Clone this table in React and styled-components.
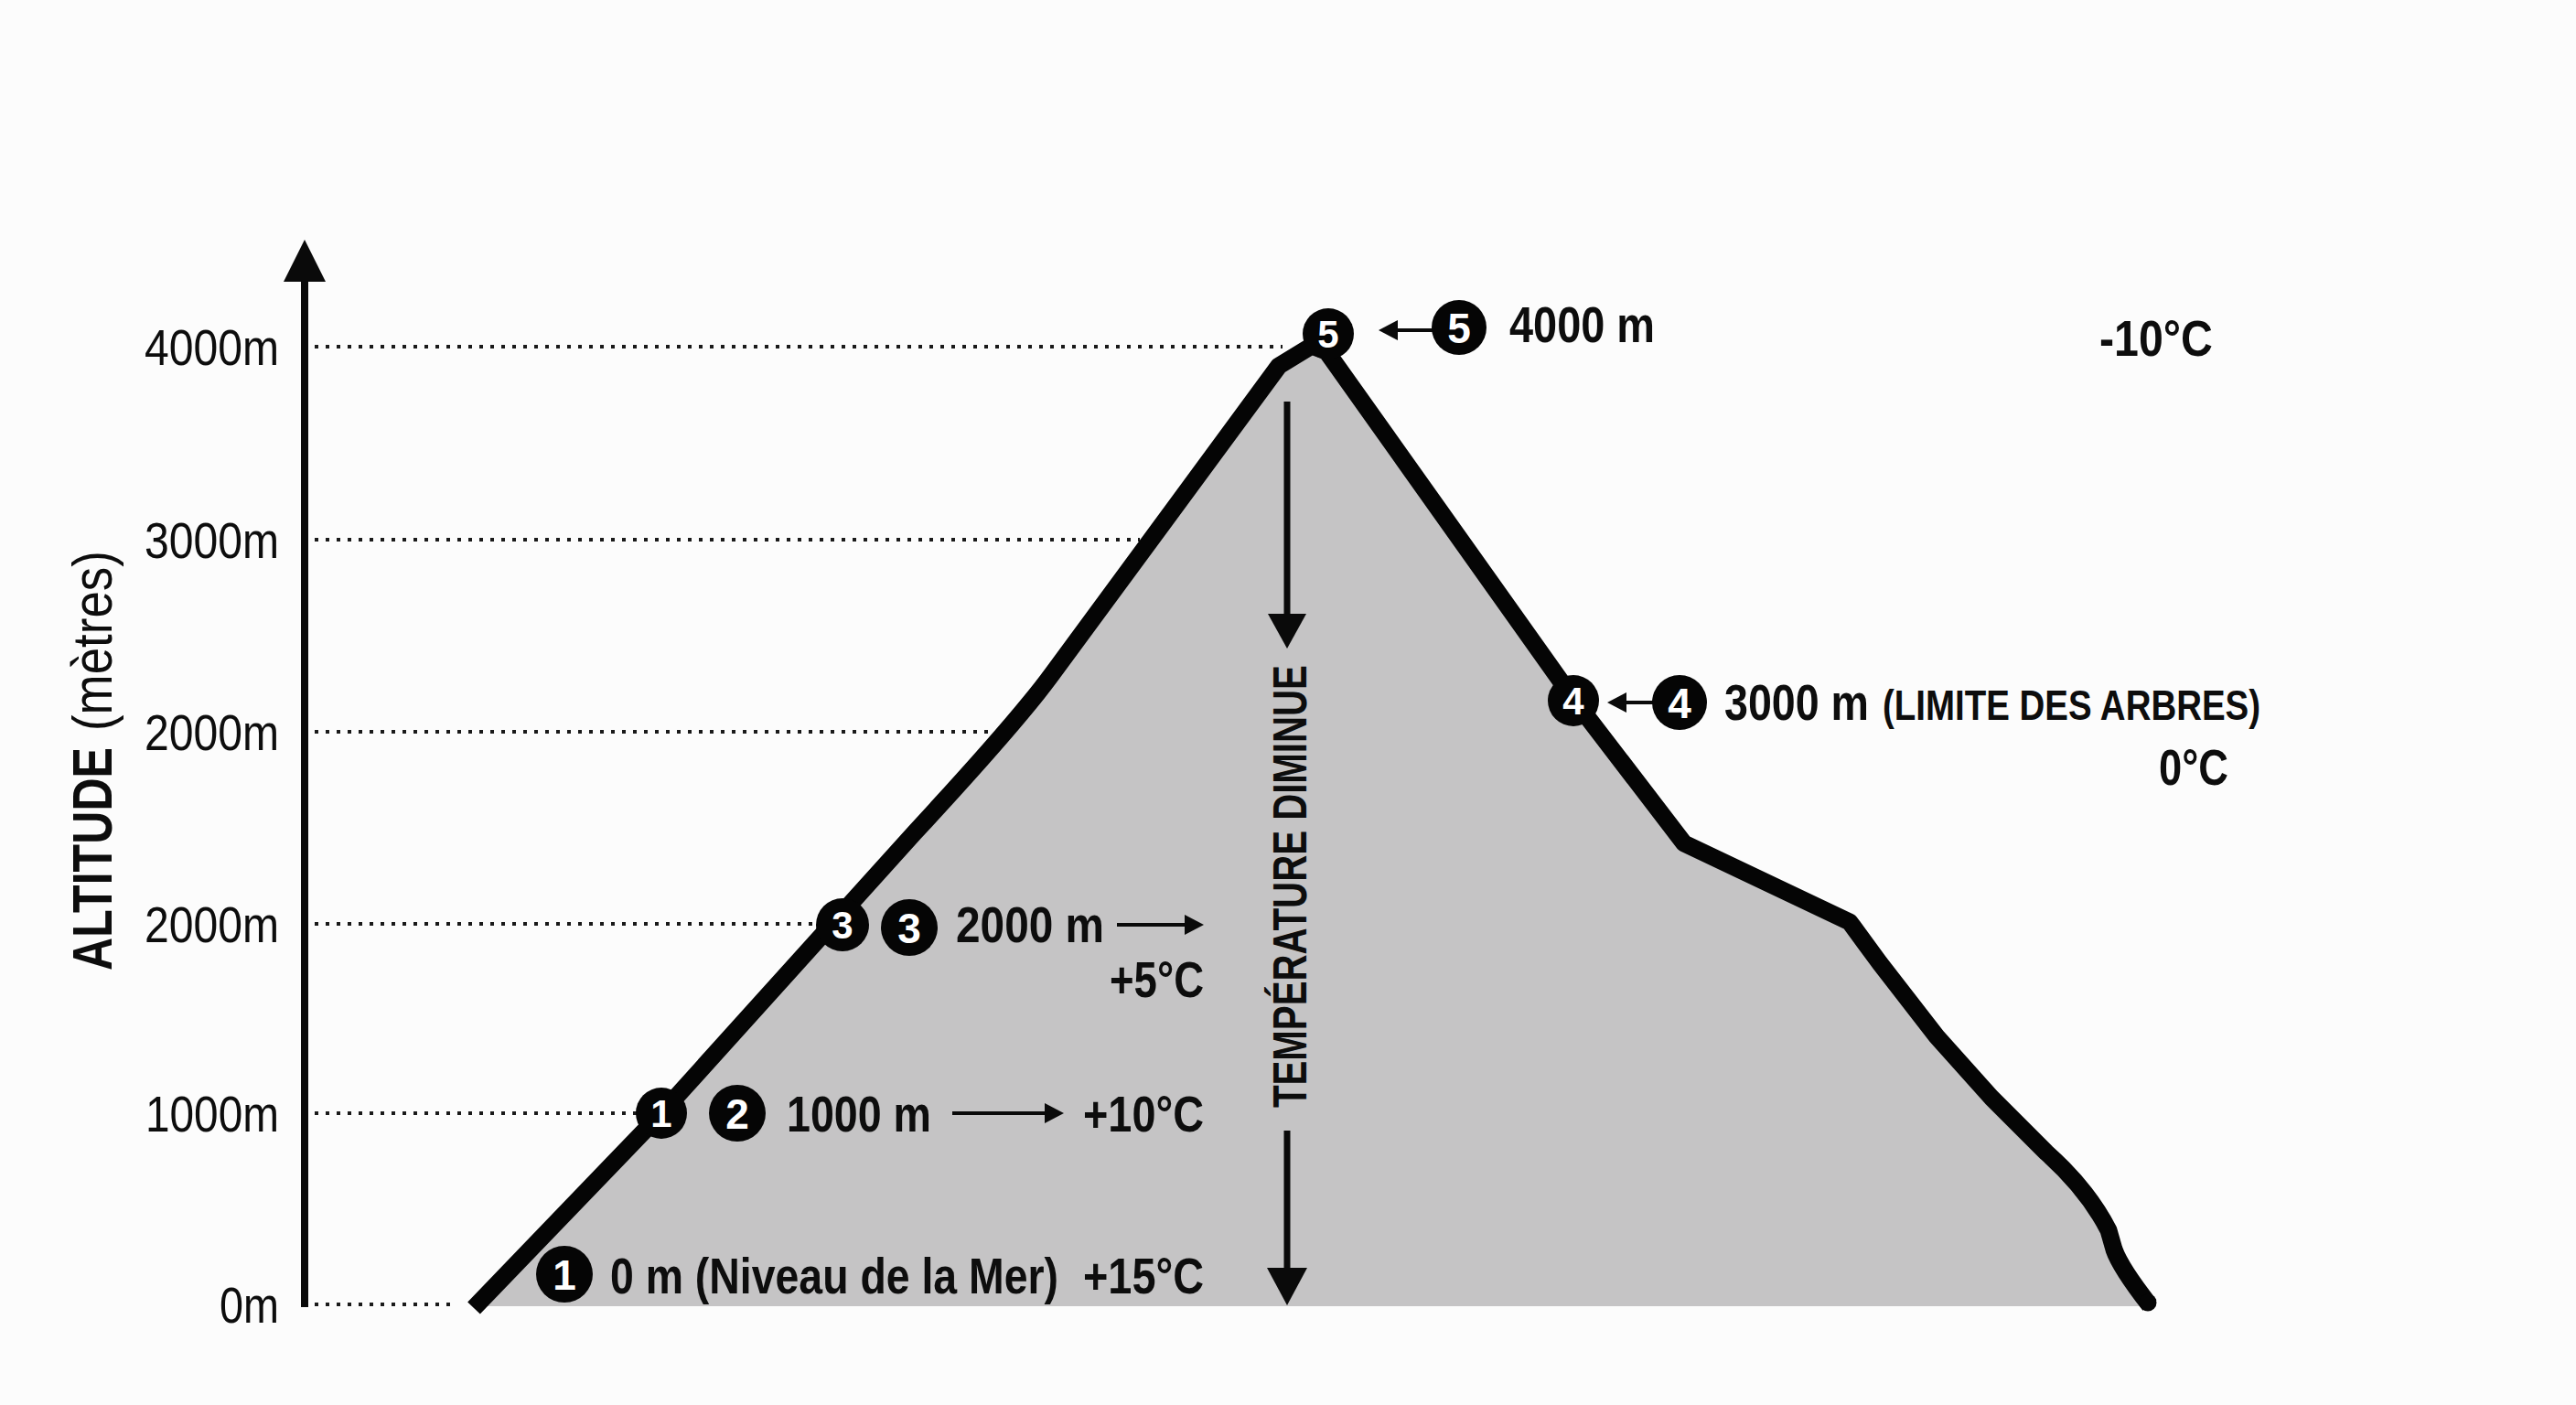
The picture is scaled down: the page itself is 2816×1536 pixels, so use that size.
import React, { useLayoutEffect, useRef, useState } from 'react';
import styled, { createGlobalStyle } from 'styled-components';

const GlobalStyle = createGlobalStyle`
  html, body {
    margin: 0;
    padding: 0;
    background: #fcfcfc;
  }
  body {
    overflow: hidden;
  }
`;

const Page = styled.div`
  width: 2816px;
  height: 1536px;
  background: #fcfcfc;
  display: flex;
`;

const Chart = styled.svg`
  display: block;
  width: 2816px;
  height: 1536px;
`;

const Text = styled.text`
  font-family: 'Liberation Sans', Arial, sans-serif;
  font-size: ${(props) => props.$size || 56}px;
  font-weight: ${(props) => (props.$bold ? 700 : 400)};
  fill: ${(props) => props.$color || '#0d0d0d'};
`;

const Dotted = styled.line`
  stroke: #1a1a1a;
  stroke-width: 4;
  stroke-dasharray: 4 8;
`;

const Stroke = styled.line`
  stroke: #0a0a0a;
  stroke-width: ${(props) => props.$w || 4};
`;

const Head = styled.polygon`
  fill: #0a0a0a;
`;

const Ridge = styled.path`
  fill: none;
  stroke: #050505;
  stroke-width: 19;
  stroke-linejoin: round;
  stroke-linecap: butt;
`;

const Slope = styled.path`
  fill: #c5c4c5;
  stroke: none;
`;

const Dot = styled.circle`
  fill: #050505;
`;

const ticks = [
  { y: 379, label: '4000m', w: 147, end: 1402 },
  { y: 590, label: '3000m', w: 147, end: 1246 },
  { y: 800, label: '2000m', w: 147, end: 1094 },
  { y: 1010, label: '2000m', w: 147, end: 893 },
  { y: 1217, label: '1000m', w: 146, end: 696 },
  { y: 1426, label: '0m', w: 65, end: 498 },
];

const labels = [
  { x: 1650, y: 374, w: 159, t: '4000 m' },
  { x: 2295, y: 389, w: 124, t: '-10°C' },
  { x: 1885, y: 787, w: 158, t: '3000 m' },
  { x: 2058, y: 787, w: 413, t: '(LIMITE DES ARBRES)', size: 46 },
  { x: 2360, y: 858, w: 76, t: '0°C' },
  { x: 1045, y: 1030, w: 162, t: '2000 m' },
  { x: 1213, y: 1090, w: 103, t: '+5°C' },
  { x: 860, y: 1237, w: 158, t: '1000 m' },
  { x: 1184, y: 1237, w: 132, t: '+10°C' },
  { x: 667, y: 1414, w: 490, t: '0 m (Niveau de la Mer)' },
  { x: 1184, y: 1414, w: 132, t: '+15°C' },
];

const badges = [
  { cx: 723, cy: 1217, r: 28, n: '1', size: 42 },
  { cx: 921, cy: 1011, r: 29, n: '3', size: 42 },
  { cx: 1452, cy: 365, r: 28, n: '5', size: 42 },
  { cx: 1720, cy: 766, r: 28, n: '4', size: 42 },
  { cx: 617, cy: 1393, r: 31, n: '1', size: 46 },
  { cx: 806, cy: 1217, r: 31, n: '2', size: 46 },
  { cx: 994, cy: 1014, r: 31, n: '3', size: 46 },
  { cx: 1595, cy: 358, r: 30, n: '5', size: 46 },
  { cx: 1836, cy: 768, r: 30, n: '4', size: 46 },
];

const ridge =
  'M 518 1430 L 723 1217 L 1000 910 Q 1112 789 1150 737 L 1398 400 L 1434 378 L 1450 384 ' +
  'L 1720 764 L 1841 922 L 2022 1008 L 2055 1053 L 2117 1133 L 2177 1200 L 2237 1260 ' +
  'Q 2282 1300 2305 1345 L 2311 1366 Q 2318 1386 2350 1427';

// condensed type: the face is squeezed to the width it has in the drawing
const Label = ({ x, y, w, size, bold = true, children }) => {
  const ref = useRef(null);
  const [squeeze, setSqueeze] = useState(0.82);

  useLayoutEffect(() => {
    const natural = ref.current ? ref.current.getComputedTextLength() : 0;
    if (natural > 0) setSqueeze(w / natural);
  }, [w, size, children]);

  return (
    <g transform={`translate(${x} ${y}) scale(${squeeze} 1)`}>
      <Text ref={ref} x={0} y={0} $size={size} $bold={bold}>
        {children}
      </Text>
    </g>
  );
};

const Badge = ({ cx, cy, r, n, size }) => (
  <g>
    <Dot cx={cx} cy={cy} r={r} />
    <Text x={cx} y={cy + size * 0.36} textAnchor="middle" $size={size} $bold $color="#ffffff">
      {n}
    </Text>
  </g>
);

const HArrow = ({ from, to, y }) => {
  const dir = to > from ? 1 : -1;
  const base = to - dir * 21;
  return (
    <g>
      <Stroke x1={from} y1={y} x2={base} y2={y} $w={4} />
      <Head points={`${base},${y - 11} ${base},${y + 11} ${to},${y}`} />
    </g>
  );
};

const VArrow = ({ x, from, to, head = 40, half = 21 }) => (
  <g>
    <Stroke x1={x} y1={from} x2={x} y2={to - head + 4} $w={7} />
    <Head points={`${x - half},${to - head} ${x + half},${to - head} ${x},${to}`} />
  </g>
);

const App = () => (
  <Page>
    <GlobalStyle />
    <Chart viewBox="0 0 2816 1536" xmlns="http://www.w3.org/2000/svg">
      {ticks.map((tick) => (
        <g key={tick.y}>
          <Dotted x1={344} y1={tick.y} x2={tick.end} y2={tick.y} />
          <Label x={305 - tick.w} y={tick.y + 20} w={tick.w} size={56} bold={false}>
            {tick.label}
          </Label>
        </g>
      ))}

      {/* vertical axis */}
      <Stroke x1={333} y1={300} x2={333} y2={1429} $w={8} />
      <Head points="310,308 356,308 333,262" />

      <g transform="translate(122 1061) rotate(-90)">
        <Label x={0} y={0} w={244} size={62}>ALTITUDE</Label>
        <Label x={262} y={0} w={197} size={62} bold={false}>(mètres)</Label>
      </g>

      {/* mountain */}
      <Slope d={`${ridge} L 2337 1428 L 520 1428 Z`} />
      <Ridge d={ridge} />
      <Dot cx={2348} cy={1424} r={9.5} />

      {/* temperature trend */}
      <VArrow x={1407} from={439} to={709} head={38} half={21} />
      <VArrow x={1407} from={1236} to={1427} head={41} half={22} />
      <g transform="translate(1428 1211) rotate(-90)">
        <Label x={0} y={0} w={484} size={52}>TEMPÉRATURE DIMINUE</Label>
      </g>

      <HArrow from={1221} to={1316} y={1011} />
      <HArrow from={1041} to={1163} y={1217} />
      <HArrow from={1566} to={1507} y={361} />
      <HArrow from={1807} to={1757} y={768} />

      {badges.map((b) => (
        <Badge key={`${b.cx}-${b.cy}`} {...b} />
      ))}

      {labels.map((l) => (
        <Label key={l.t} x={l.x} y={l.y} w={l.w} size={l.size}>
          {l.t}
        </Label>
      ))}
    </Chart>
  </Page>
);

export default App;
